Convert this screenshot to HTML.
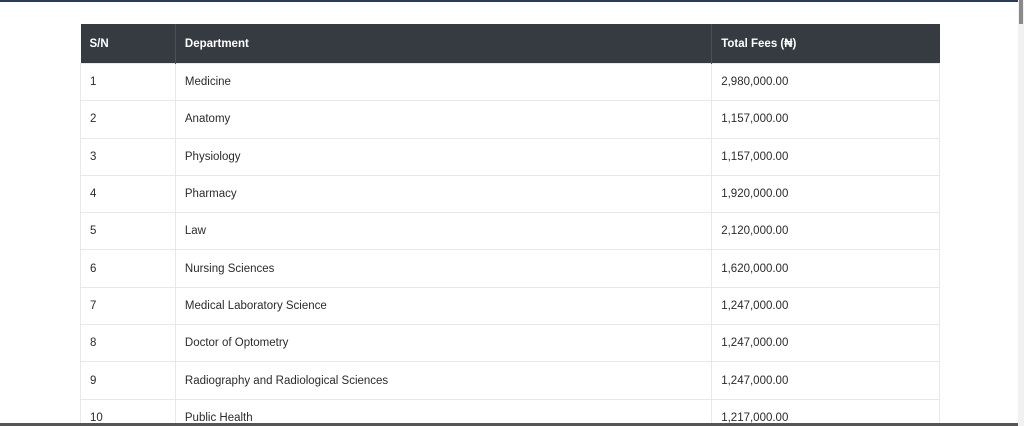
<!DOCTYPE html>
<html><head><meta charset="utf-8"><style>
html,body{margin:0;padding:0;width:1024px;height:426px;overflow:hidden;background:#fff;font-family:"Liberation Sans",sans-serif;}
.top{position:absolute;left:0;top:0;width:1018px;height:2px;background:#2c3a5e;z-index:5}
.sb{position:fixed;left:1018px;top:0;width:6px;height:426px;background:#f1f1f1;z-index:5}
.thumb{position:fixed;left:1019px;top:0;width:4px;height:24px;background:#8a8a8a;z-index:6}
.bot{position:fixed;left:0;top:423px;width:1018px;height:3px;background:#555;z-index:5}
.wrap{position:absolute;left:0;top:0;width:1024px;height:426px;overflow:hidden}
table{position:absolute;left:80px;top:24px;width:860px;border-collapse:collapse;font-size:11.5px;color:#2b2b2b;}
th{background:#363a41;color:#fff;text-align:left;font-weight:bold;height:39px;padding:0 0 0 9px;border-right:1px solid #4a4e56;}
td{height:36.3px;padding:0 0 0 9px;border:1px solid #e6e8ec;}
th:last-child{border-right:none}
</style></head><body>
<div class="wrap">
<div class="top"></div>
<table>
<colgroup><col style="width:95px"><col style="width:537px"><col style="width:228px"></colgroup>
<tr><th>S/N</th><th>Department</th><th>Total Fees (₦)</th></tr>
<tr><td>1</td><td>Medicine</td><td>2,980,000.00</td></tr>
<tr><td>2</td><td>Anatomy</td><td>1,157,000.00</td></tr>
<tr><td>3</td><td>Physiology</td><td>1,157,000.00</td></tr>
<tr><td>4</td><td>Pharmacy</td><td>1,920,000.00</td></tr>
<tr><td>5</td><td>Law</td><td>2,120,000.00</td></tr>
<tr><td>6</td><td>Nursing Sciences</td><td>1,620,000.00</td></tr>
<tr><td>7</td><td>Medical Laboratory Science</td><td>1,247,000.00</td></tr>
<tr><td>8</td><td>Doctor of Optometry</td><td>1,247,000.00</td></tr>
<tr><td>9</td><td>Radiography and Radiological Sciences</td><td>1,247,000.00</td></tr>
<tr><td>10</td><td>Public Health</td><td>1,217,000.00</td></tr>
</table>
</div>
<div class="bot"></div>
<div class="sb"></div><div class="thumb"></div>
</body></html>
